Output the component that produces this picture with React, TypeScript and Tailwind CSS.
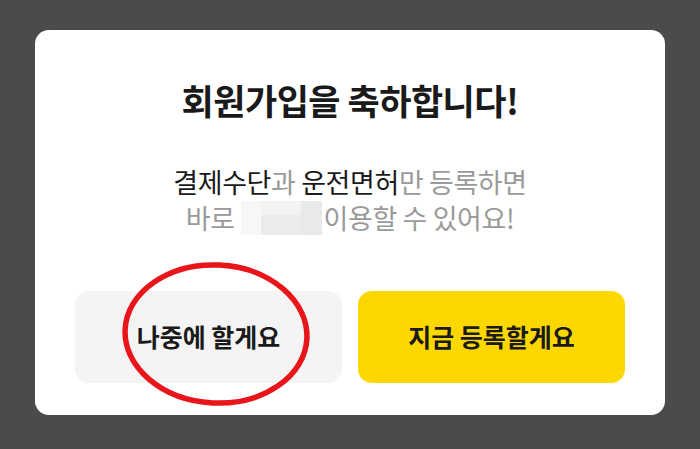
export default function App() {
  return (
    <div
      className="w-[700px] h-[449px] bg-[#4b4b4b] pt-[30px] px-[35px]"
      style={{ fontFamily: '"Noto Sans CJK KR", "Noto Sans", sans-serif' }}
    >
      <div className="relative w-[630px] h-[385px] bg-white rounded-[14px] px-[40px] pt-[48px] pb-[32px] flex flex-col">
        <h1 className="text-center text-[35px] leading-[44px] font-bold text-[#1a1a1a] tracking-[-0.5px]">
          회원가입을 축하합니다!
        </h1>
        <div className="mt-[42px] text-center text-[27px] leading-[36px] text-[#9a9a9a] tracking-[-0.4px]">
          <p>
            <span className="text-[#1a1a1a]">결제수단</span>과{' '}
            <span className="text-[#1a1a1a]">운전면허</span>만 등록하면
          </p>
          <p className="flex items-center justify-center">
            <span>바로</span>
            <span className="ml-[6px] mr-[2px] flex h-[34px] w-[81px]">
              <span className="w-[20px] bg-[#f7f7f7]" />
              <span className="w-[40px] flex flex-col">
                <span className="h-[14px] bg-[#f3f3f3]" />
                <span className="flex-1 bg-[#ebebeb]" />
              </span>
              <span className="w-[21px] bg-[#e9e9e9]" />
            </span>
            <span>이용할 수 있어요!</span>
          </p>
        </div>
        <div className="mt-auto flex gap-[16px]">
          <button className="flex-1 h-[92px] rounded-[14px] bg-[#f4f4f4] text-[25px] font-bold text-[#1a1a1a]">
            나중에 할게요
          </button>
          <button className="flex-1 h-[92px] rounded-[14px] bg-[#fdd700] text-[25px] font-bold text-[#1a1a1a]">
            지금 등록할게요
          </button>
        </div>
        <svg
          className="absolute left-[80px] top-[230px] pointer-events-none"
          width="200"
          height="150"
          viewBox="0 0 200 150"
        >
          <ellipse
            cx="101"
            cy="74"
            rx="91"
            ry="69"
            transform="rotate(3 101 74)"
            fill="none"
            stroke="#e8161b"
            strokeWidth="5.5"
          />
        </svg>
      </div>
    </div>
  );
}
